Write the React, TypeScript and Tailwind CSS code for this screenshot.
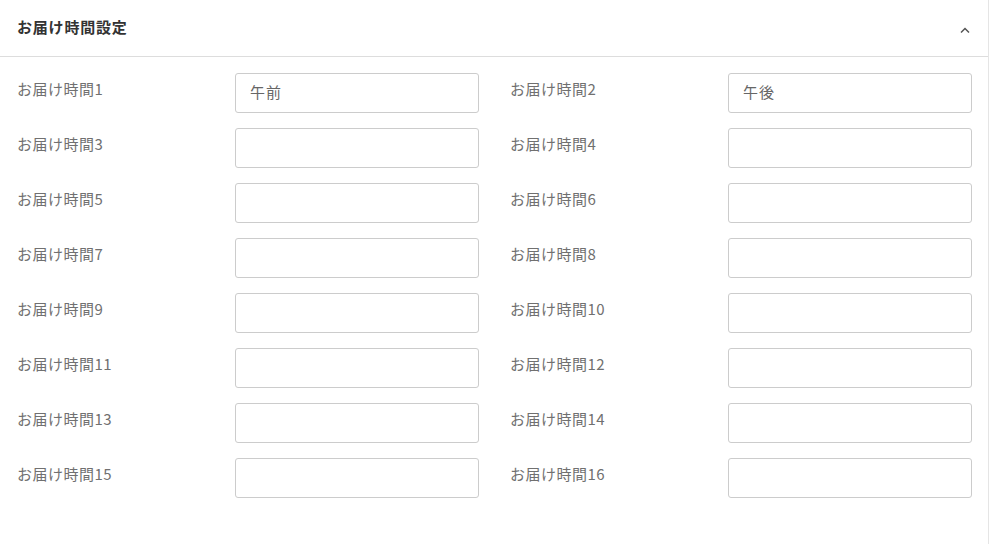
import React from 'react'

const slots = Array.from({ length: 16 }, (_, i) => ({
  label: `お届け時間${i + 1}`,
  value: i === 0 ? '午前' : i === 1 ? '午後' : '',
}))

function Field({ label, value }: { label: string; value: string }) {
  return (
    <div className="flex items-start">
      <label className="w-[218px] shrink-0 pt-[6px] text-[15px] leading-[20px] tracking-[0.5px] text-[#707070]">
        {label}
      </label>
      <input
        readOnly
        value={value}
        className="h-[40px] w-[244px] rounded-[3px] border border-[#ccc] bg-white px-[14px] pb-[4px] text-[15px] tracking-[1px] text-[#666] outline-none"
      />
    </div>
  )
}

export default function App() {
  return (
    <div
      className="min-h-[544px] w-[989px] border-r border-[#e5e5e5] bg-white"
      style={{ fontFamily: '"Noto Sans CJK JP", "Noto Sans", sans-serif' }}
    >
      {/* Header */}
      <div className="flex h-[57px] items-center justify-between border-b border-[#ddd] pl-[17px] pr-[18px]">
        <h2 className="-mt-[2px] text-[15px] font-bold tracking-[0.8px] text-[#333]">お届け時間設定</h2>
        <svg width="10" height="6" viewBox="0 0 10 6" className="mt-[3px]">
          <path d="M1 5.5 L5 1.5 L9 5.5" fill="none" stroke="#555" strokeWidth="1.5" />
        </svg>
      </div>
      {/* Fields */}
      <div className="grid grid-cols-[462px_462px] gap-x-[31px] gap-y-[15px] pl-[17px] pr-[16px] pt-[16px]">
        {slots.map((s) => (
          <Field key={s.label} label={s.label} value={s.value} />
        ))}
      </div>
    </div>
  )
}
